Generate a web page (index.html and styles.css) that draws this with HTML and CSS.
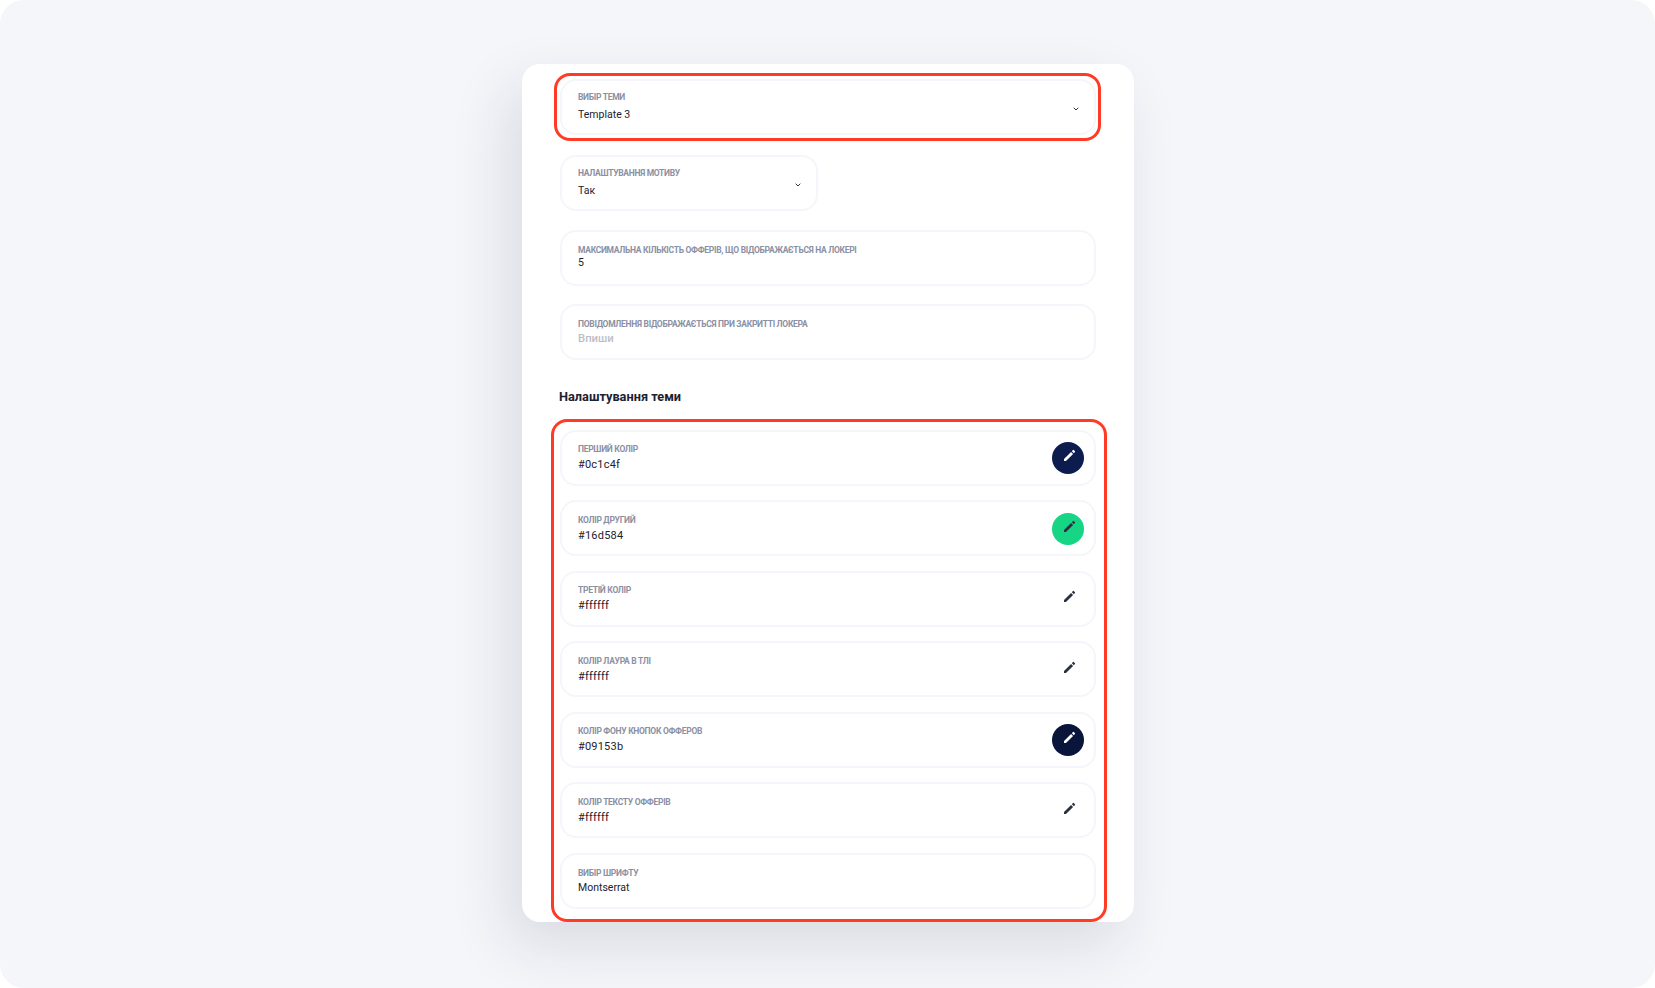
FILE: index.html
```html
<!doctype html>
<html lang="uk">
<head>
	<meta charset="UTF-8">
	<title>Налаштування теми</title>
	<link rel="stylesheet" href="styles.css">
</head>
<body>
	<div class="page">
		<div class="card">
			<div class="field field_first">
				<div>
					<div class="label">Вибір теми</div>
					<div class="value value_gap">Template 3</div>
				</div>
				<svg class="chevron" viewBox="0 0 6 4"><path d="M.7 .7 3 3 5.3 .7"/></svg>
			</div>

			<div class="field field_half">
				<div>
					<div class="label">Налаштування мотиву</div>
					<div class="value value_gap">Так</div>
				</div>
				<svg class="chevron" viewBox="0 0 6 4"><path d="M.7 .7 3 3 5.3 .7"/></svg>
			</div>

			<div class="field">
				<div>
					<div class="label">Максимальна кількість офферів, що відображається на локері</div>
					<div class="value">5</div>
				</div>
			</div>

			<div class="field">
				<div>
					<div class="label">Повідомлення відображається при закритті локера</div>
					<div class="value placeholder">Впиши</div>
				</div>
			</div>

			<h3>Налаштування теми</h3>

			<div class="colors">
				<div class="field">
					<div>
						<div class="label">Перший колір</div>
						<div class="value color_value">#0c1c4f</div>
					</div>
					<div class="swatch swatch_navy">
						<svg viewBox="0 0 24 24"><path d="M3 18V21H6L16.6 10.4 13.6 7.4ZM19.4 7.6a1 1 0 0 0 0-1.4l-1.6-1.6a1 1 0 0 0-1.4 0l-1.6 1.6 3 3z"/></svg>
					</div>
				</div>
				<div class="field">
					<div>
						<div class="label">Колір другий</div>
						<div class="value color_value">#16d584</div>
					</div>
					<div class="swatch swatch_green">
						<svg viewBox="0 0 24 24"><path d="M3 18V21H6L16.6 10.4 13.6 7.4ZM19.4 7.6a1 1 0 0 0 0-1.4l-1.6-1.6a1 1 0 0 0-1.4 0l-1.6 1.6 3 3z"/></svg>
					</div>
				</div>
				<div class="field">
					<div>
						<div class="label">Третій колір</div>
						<div class="value color_value">#ffffff</div>
					</div>
					<div class="swatch">
						<svg viewBox="0 0 24 24"><path d="M3 18V21H6L16.6 10.4 13.6 7.4ZM19.4 7.6a1 1 0 0 0 0-1.4l-1.6-1.6a1 1 0 0 0-1.4 0l-1.6 1.6 3 3z"/></svg>
					</div>
				</div>
				<div class="field">
					<div>
						<div class="label">Колір лаура в тлі</div>
						<div class="value color_value">#ffffff</div>
					</div>
					<div class="swatch">
						<svg viewBox="0 0 24 24"><path d="M3 18V21H6L16.6 10.4 13.6 7.4ZM19.4 7.6a1 1 0 0 0 0-1.4l-1.6-1.6a1 1 0 0 0-1.4 0l-1.6 1.6 3 3z"/></svg>
					</div>
				</div>
				<div class="field">
					<div>
						<div class="label">Колір фону кнопок офферов</div>
						<div class="value color_value">#09153b</div>
					</div>
					<div class="swatch swatch_dark">
						<svg viewBox="0 0 24 24"><path d="M3 18V21H6L16.6 10.4 13.6 7.4ZM19.4 7.6a1 1 0 0 0 0-1.4l-1.6-1.6a1 1 0 0 0-1.4 0l-1.6 1.6 3 3z"/></svg>
					</div>
				</div>
				<div class="field">
					<div>
						<div class="label">Колір тексту офферів</div>
						<div class="value color_value">#ffffff</div>
					</div>
					<div class="swatch">
						<svg viewBox="0 0 24 24"><path d="M3 18V21H6L16.6 10.4 13.6 7.4ZM19.4 7.6a1 1 0 0 0 0-1.4l-1.6-1.6a1 1 0 0 0-1.4 0l-1.6 1.6 3 3z"/></svg>
					</div>
				</div>
				<div class="field">
					<div>
						<div class="label">Вибір шрифту</div>
						<div class="value font_value">Montserrat</div>
					</div>
				</div>
			</div>

			<div class="mark mark_top"></div>
			<div class="mark mark_bottom"></div>
		</div>
	</div>
</body>
</html>
```

FILE: styles.css
```css
html, body { margin: 0; height: 100%; background: #fff; }
body { font-family: Roboto, "Liberation Sans", sans-serif; color: #1c2230; }

.page {
	height: 988px;
	box-sizing: border-box;
	padding-top: 64px;
	background: #f5f6fa;
	border-radius: 24px;
	overflow: hidden;
}

.card {
	position: relative;
	width: 612px;
	height: 858px;
	margin-left: 522px;
	box-sizing: border-box;
	padding: 15px 38px 0 38px;
	background: #fff;
	border-radius: 18px;
	box-shadow: -14px 24px 60px rgba(30, 34, 60, 0.12);
}

.field {
	display: flex;
	align-items: center;
	justify-content: space-between;
	height: 56px;
	box-sizing: border-box;
	margin-bottom: 18.5px;
	padding: 0 15px 0 16px;
	border: 2px solid #f5f5fb;
	border-radius: 16px;
}
.field_first { margin-bottom: 20px; }
.field_half { width: 258px; }
.colors .field { margin-bottom: 14.5px; padding-top: 1px; }

.label {
	font-size: 8.5px;
	line-height: 11px;
	letter-spacing: -0.3px;
	font-weight: 700;
	color: #8b90a3;
	text-transform: uppercase;
}
.value {
	font-size: 10.5px;
	line-height: 14px;
	color: #1c2230;
}
.value_gap { margin-top: 5px; }
.font_value { margin-top: 2px; }
.color_value { margin-top: 3px; font-size: 11px; letter-spacing: 0.2px; }
.placeholder { margin-top: 2px; font-size: 11.3px; font-weight: 500; color: #bcbec6; }

.chevron { width: 6px; height: 4px; margin: 3px 0.5px 0 0; fill: none; stroke: #2c3446; stroke-width: 1; }

h3 {
	margin: 27.5px 0 24px -1px;
	font-size: 12.75px;
	line-height: 18px;
	font-weight: 700;
	color: #1c2230;
}

.colors { display: flex; flex-direction: column; }

.swatch {
	display: flex;
	align-items: center;
	justify-content: center;
	width: 32px;
	height: 32px;
	margin-right: -5px;
	border-radius: 50%;
}
.swatch svg { width: 16px; height: 16px; margin: -5.6px 0 0 3px; fill: #2a3040; }
.swatch_navy { background: #0c1c4f; }
.swatch_green { background: #16d584; }
.swatch_dark { background: #09153b; }
.swatch_navy svg, .swatch_dark svg { fill: #fff; }

.mark {
	position: absolute;
	box-sizing: border-box;
	border: 3px solid #ff3b26;
	pointer-events: none;
}
.mark_top { left: 32px; top: 9px; width: 547px; height: 68px; border-radius: 16px; }
.mark_bottom { left: 29px; top: 355px; width: 556px; height: 503px; border-radius: 16px; }
```
